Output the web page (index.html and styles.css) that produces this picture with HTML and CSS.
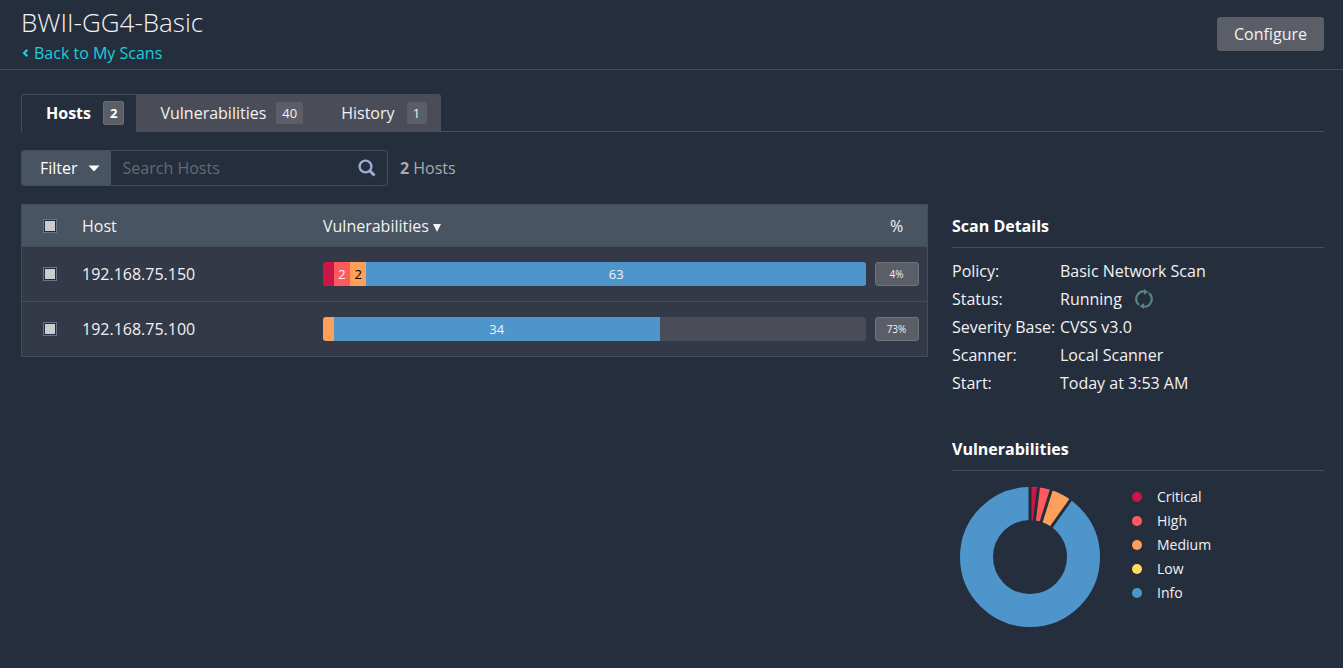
FILE: index.html
```html
<!DOCTYPE html>
<html lang="en">
<head>
<meta charset="utf-8">
<meta name="viewport" content="width=device-width, initial-scale=1">
<title>BWII-GG4-Basic</title>
<link rel="stylesheet" href="styles.css">
</head>
<body>
<header class="page-header">
  <div>
    <h1 class="title">BWII-GG4-Basic</h1>
    <a class="back" href="#scans"><svg class="back-icon" viewBox="0 0 8 10" aria-hidden="true"><path d="M6.300 1.800 3.100 5l3.200 3.200" fill="none" stroke="currentColor" stroke-width="2.300"/></svg>Back to My Scans</a>
  </div>
  <button class="configure" type="button">Configure</button>
</header>

<nav class="tabs">
  <a class="tab tab-active" href="#hosts">Hosts <span class="count">2</span></a>
  <a class="tab" href="#vulnerabilities">Vulnerabilities <span class="count">40</span></a>
  <a class="tab tab-last" href="#history">History <span class="count">1</span></a>
</nav>

<div class="toolbar">
  <div class="search">
    <button class="filter" type="button">Filter <svg class="caret" viewBox="0 0 12 7" aria-hidden="true"><path d="M.5.5h11L6 6.500z" fill="currentColor"/></svg></button>
    <input class="search-input" type="text" placeholder="Search Hosts" aria-label="Search Hosts">
    <button class="search-button" type="button" aria-label="Search"><svg class="search-icon" viewBox="0 0 18 18" aria-hidden="true"><circle cx="7.500" cy="7.500" r="5.900" fill="none" stroke="currentColor" stroke-width="2.400"/><path d="m11.500 11.500 5 5" stroke="currentColor" stroke-width="3"/></svg></button>
  </div>
  <p class="total"><strong>2</strong> Hosts</p>
</div>

<main class="content">
  <table class="hosts">
    <colgroup><col class="col-check"><col class="col-host"><col><col class="col-percent"></colgroup>
    <thead>
      <tr>
        <th class="check-cell"><input class="check" type="checkbox" aria-label="Select all hosts"></th>
        <th>Host</th>
        <th>Vulnerabilities <svg class="sort" viewBox="0 0 8 8" aria-hidden="true"><path d="M0 0h8L4 8z" fill="currentColor"/></svg></th>
        <th class="percent-cell">%</th>
      </tr>
    </thead>
    <tbody>
      <tr>
        <td class="check-cell"><input class="check" type="checkbox" aria-label="Select 192.168.75.150"></td>
        <td>192.168.75.150</td>
        <td><div class="bar"><span class="critical" style="width:2%"></span><span class="high" style="width:3%">2</span><span class="medium" style="width:3%">2</span><span class="info" style="width:92%">63</span></div></td>
        <td class="percent-cell"><span class="percent">4%</span></td>
      </tr>
      <tr>
        <td class="check-cell"><input class="check" type="checkbox" aria-label="Select 192.168.75.100"></td>
        <td>192.168.75.100</td>
        <td><div class="bar"><span class="medium" style="width:2%"></span><span class="info" style="width:60%">34</span></div></td>
        <td class="percent-cell"><span class="percent">73%</span></td>
      </tr>
    </tbody>
  </table>

  <aside class="side">
    <section>
      <h2 class="side-title">Scan Details</h2>
      <dl class="details">
        <dt>Policy:</dt><dd>Basic Network Scan</dd>
        <dt>Status:</dt><dd class="status">Running <svg class="running" viewBox="0 0 20 20" aria-hidden="true"><g fill="none" stroke="currentColor" stroke-width="2.200"><path d="M5 15.900A7.700 7.700 0 0 1 11 2.400"/><path d="M15 4.100A7.700 7.700 0 0 1 9 17.600"/></g><path d="M10 0v5.800l4.500-2.700zM10 20v-5.800l-4.500 2.700z" fill="currentColor"/></svg></dd>
        <dt>Severity Base:</dt><dd>CVSS v3.0</dd>
        <dt>Scanner:</dt><dd>Local Scanner</dd>
        <dt>Start:</dt><dd>Today at 3:53 AM</dd>
      </dl>
    </section>
    <section>
      <h2 class="side-title">Vulnerabilities</h2>
      <div class="chart">
        <svg class="donut" viewBox="-70 -70 140 140" role="img" aria-label="Vulnerabilities by severity">
          <g fill="none" stroke-width="33">
            <circle class="ring-info" r="53.500"/>
            <path class="ring-critical" d="M0-53.500A53.500 53.500 0 0 1 6.500-53.100"/>
            <path class="ring-high" d="M6.500-53.100A53.500 53.500 0 0 1 16.200-51"/>
            <path class="ring-medium" d="M16.200-51A53.500 53.500 0 0 1 31-43.600"/>
          </g>
          <path class="ring-gap" d="M0-36V-71M4.300-35.800 8.600-70.500M10.900-34.300 21.500-67.700M20.900-29.300 41.100-57.900"/>
        </svg>
        <ul class="legend">
          <li><span class="dot critical"></span>Critical</li>
          <li><span class="dot high"></span>High</li>
          <li><span class="dot medium"></span>Medium</li>
          <li><span class="dot low"></span>Low</li>
          <li><span class="dot info"></span>Info</li>
        </ul>
      </div>
    </section>
  </aside>
</main>
</body>
</html>
```
FILE: styles.css
```css
:root {
  --bg: #252e3d;
  --line: #464d5a;
  --tab: #4a4d57;
  --button: #5c5e67;
  --slate: #485461;
}

* { box-sizing: border-box; }

body {
  margin: 0;
  background: var(--bg);
  color: #f2f2f2;
  font: 16px/24px "Open Sans", sans-serif;
}

h1, h2, p, dl, dd, ul { margin: 0; padding: 0; }

button, input { font: inherit; color: inherit; }

.page-header {
  display: flex;
  justify-content: space-between;
  align-items: center;
  height: 70px;
  padding: 0 19px 1px 21px;
  border-bottom: 1px solid var(--line);
}

.title {
  font-size: 26px;
  line-height: 38px;
  font-weight: 300;
}

.back {
  display: flex;
  align-items: center;
  gap: 5px;
  color: #1fcddc;
  text-decoration: none;
}

.back-icon { width: 8px; height: 10px; }

.configure {
  height: 34px;
  padding: 0 16px;
  border: 1px solid var(--button);
  border-radius: 3px;
  background: var(--button);
}

.tabs {
  display: flex;
  height: 38px;
  margin: 24px 19px 0 21px;
  border-bottom: 1px solid var(--line);
}

.tab {
  display: flex;
  align-items: center;
  gap: 10px;
  padding: 0 14px 0 24px;
  border-top: 1px solid var(--line);
  background: var(--tab);
  color: inherit;
  text-decoration: none;
}

.tab-active {
  gap: 12px;
  padding: 0 12px 0 24px;
  border-left: 1px solid var(--line);
  border-radius: 3px 0 0 0;
  margin-bottom: -1px;
  padding-bottom: 1px;
  background: var(--bg);
  color: #fff;
  font-weight: 700;
}

.tab-last {
  gap: 12px;
  border-radius: 0 3px 0 0;
}

.count {
  min-width: 20px;
  padding: 0 6px;
  border-radius: 2px;
  background: var(--button);
  font-size: 13px;
  line-height: 22px;
  text-align: center;
}

.tab-active .count {
  border: 1px solid #6a6c75;
}

.toolbar {
  display: flex;
  align-items: center;
  gap: 12px;
  margin: 18px 19px 18px 21px;
}

.search {
  display: flex;
  width: 367px;
  height: 36px;
  border: 1px solid var(--line);
  border-radius: 3px;
  overflow: hidden;
}

.filter {
  display: flex;
  align-items: center;
  gap: 10px;
  padding: 0 11px 0 18px;
  border: 0;
  background: var(--slate);
  color: #fff;
}

.caret { width: 12px; height: 7px; }

.search-input {
  flex: 1;
  min-width: 0;
  padding: 0 12px;
  border: 0;
  background: none;
}

.search-input::placeholder { color: #646a73; opacity: 1; }

.search-button {
  display: flex;
  align-items: center;
  padding: 0 11px;
  border: 0;
  background: none;
  color: #9fadd6;
}

.search-icon { width: 18px; height: 18px; }

.total { color: #a9abab; }

.content {
  display: flex;
  align-items: flex-start;
  gap: 24px;
  padding: 0 19px 0 21px;
}

.hosts {
  flex: 1;
  width: 0;
  table-layout: fixed;
  border-collapse: separate;
  border-spacing: 0;
  border: 1px solid var(--line);
  background: #343947;
}

.col-check { width: 60px; }
.col-host { width: 241px; }
.col-percent { width: 61px; }

.hosts th, .hosts td {
  height: 55px;
  padding: 0;
  text-align: left;
  font-weight: 400;
}

.hosts th {
  height: 41px;
  background: var(--slate);
}

.hosts td { border-top: 1px solid var(--line); }

.hosts .check-cell { padding-left: 21px; }

.hosts .percent-cell { text-align: center; }

.check {
  display: block;
  appearance: none;
  width: 14px;
  height: 14px;
  margin: 0;
  padding: 1px;
  border: 1px solid #65758e;
  background: #ccc;
  box-shadow: inset 0 0 0 1px #242d3c;
}

.sort { width: 8px; height: 8px; }

.bar {
  display: flex;
  height: 24px;
  border-radius: 3px;
  background: var(--tab);
  overflow: hidden;
  font-size: 13px;
  text-align: center;
}

.critical { background: #cc1548; }
.high { background: #ff5a5c; }
.medium { background: #ff9f5c; }
.low { background: #ffdc5f; }
.info { background: #4e95cc; }

.bar .medium { color: #000; }

.percent {
  display: block;
  width: 44px;
  margin: 0 auto;
  border: 1px solid #72747b;
  border-radius: 3px;
  background: var(--button);
  font-size: 10px;
  line-height: 22px;
}

.side {
  width: 372px;
  display: grid;
  gap: 30px;
}

.side-title {
  padding: 10px 0 9px;
  border-bottom: 1px solid var(--line);
  color: #fff;
  font-size: 16px;
  line-height: 24px;
}

.details {
  display: grid;
  grid-template-columns: 108px 1fr;
  margin-top: 9px;
  line-height: 28px;
}

.status {
  display: flex;
  align-items: center;
  gap: 12px;
}

.running { width: 20px; height: 20px; color: #56857f; }

.chart {
  display: flex;
  align-items: center;
  gap: 32px;
  padding: 14px 8px;
}

.donut { width: 140px; height: 140px; }

.ring-info { stroke: #4e95cc; }
.ring-critical { stroke: #cc1548; }
.ring-high { stroke: #ff5a5c; }
.ring-medium { stroke: #ff9f5c; }
.ring-gap { stroke: var(--bg); stroke-width: 3; }

.legend {
  margin-bottom: 24px;
  list-style: none;
  font-size: 14px;
}

.legend li {
  display: flex;
  align-items: center;
  gap: 15px;
}

.dot {
  width: 10px;
  height: 10px;
  border-radius: 50%;
}
```
